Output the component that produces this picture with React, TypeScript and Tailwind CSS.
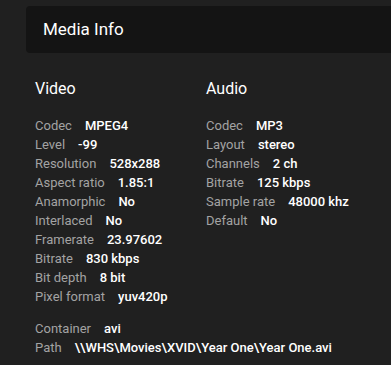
const video = [
  ['Codec', 'MPEG4'],
  ['Level', '-99'],
  ['Resolution', '528x288'],
  ['Aspect ratio', '1.85:1'],
  ['Anamorphic', 'No'],
  ['Interlaced', 'No'],
  ['Framerate', '23.97602'],
  ['Bitrate', '830 kbps'],
  ['Bit depth', '8 bit'],
  ['Pixel format', 'yuv420p'],
]

const audio = [
  ['Codec', 'MP3'],
  ['Layout', 'stereo'],
  ['Channels', '2 ch'],
  ['Bitrate', '125 kbps'],
  ['Sample rate', '48000 khz'],
  ['Default', 'No'],
]

const file = [
  ['Container', 'avi'],
  ['Path', '\\\\WHS\\Movies\\XVID\\Year One\\Year One.avi'],
]

const Row = ({ label, value }: { label: string; value: string }) => (
  <div className="flex h-[19px] items-center whitespace-nowrap text-[13px]">
    <span className="text-[#a3a3a3]">{label}</span>
    <span className="ml-[13px] font-medium text-white">{value}</span>
  </div>
)

export default function App() {
  return (
    <div className="h-[365px] w-[391px] overflow-hidden bg-[#202020] pt-[6px] font-['Roboto',sans-serif]">
      <div className="ml-[26px] flex h-[47px] items-center rounded-l-[4px] bg-[#141414] pl-[17px]">
        <h1 className="pt-[1px] text-[17px] text-white">Media Info</h1>
      </div>
      <div className="pl-[35px] pt-[25px]">
        <div className="flex">
          <section className="w-[171px]">
            <h2 className="mb-[16px] h-[22px] text-[16px] leading-[22px] text-white">Video</h2>
            {video.map(([l, v], i) => (
              <Row key={i} label={l} value={v} />
            ))}
          </section>
          <section>
            <h2 className="mb-[16px] h-[22px] text-[16px] leading-[22px] text-white">Audio</h2>
            {audio.map(([l, v], i) => (
              <Row key={i} label={l} value={v} />
            ))}
          </section>
        </div>
        <div className="mt-[13px]">
          {file.map(([l, v], i) => (
            <Row key={i} label={l} value={v} />
          ))}
        </div>
      </div>
    </div>
  )
}
